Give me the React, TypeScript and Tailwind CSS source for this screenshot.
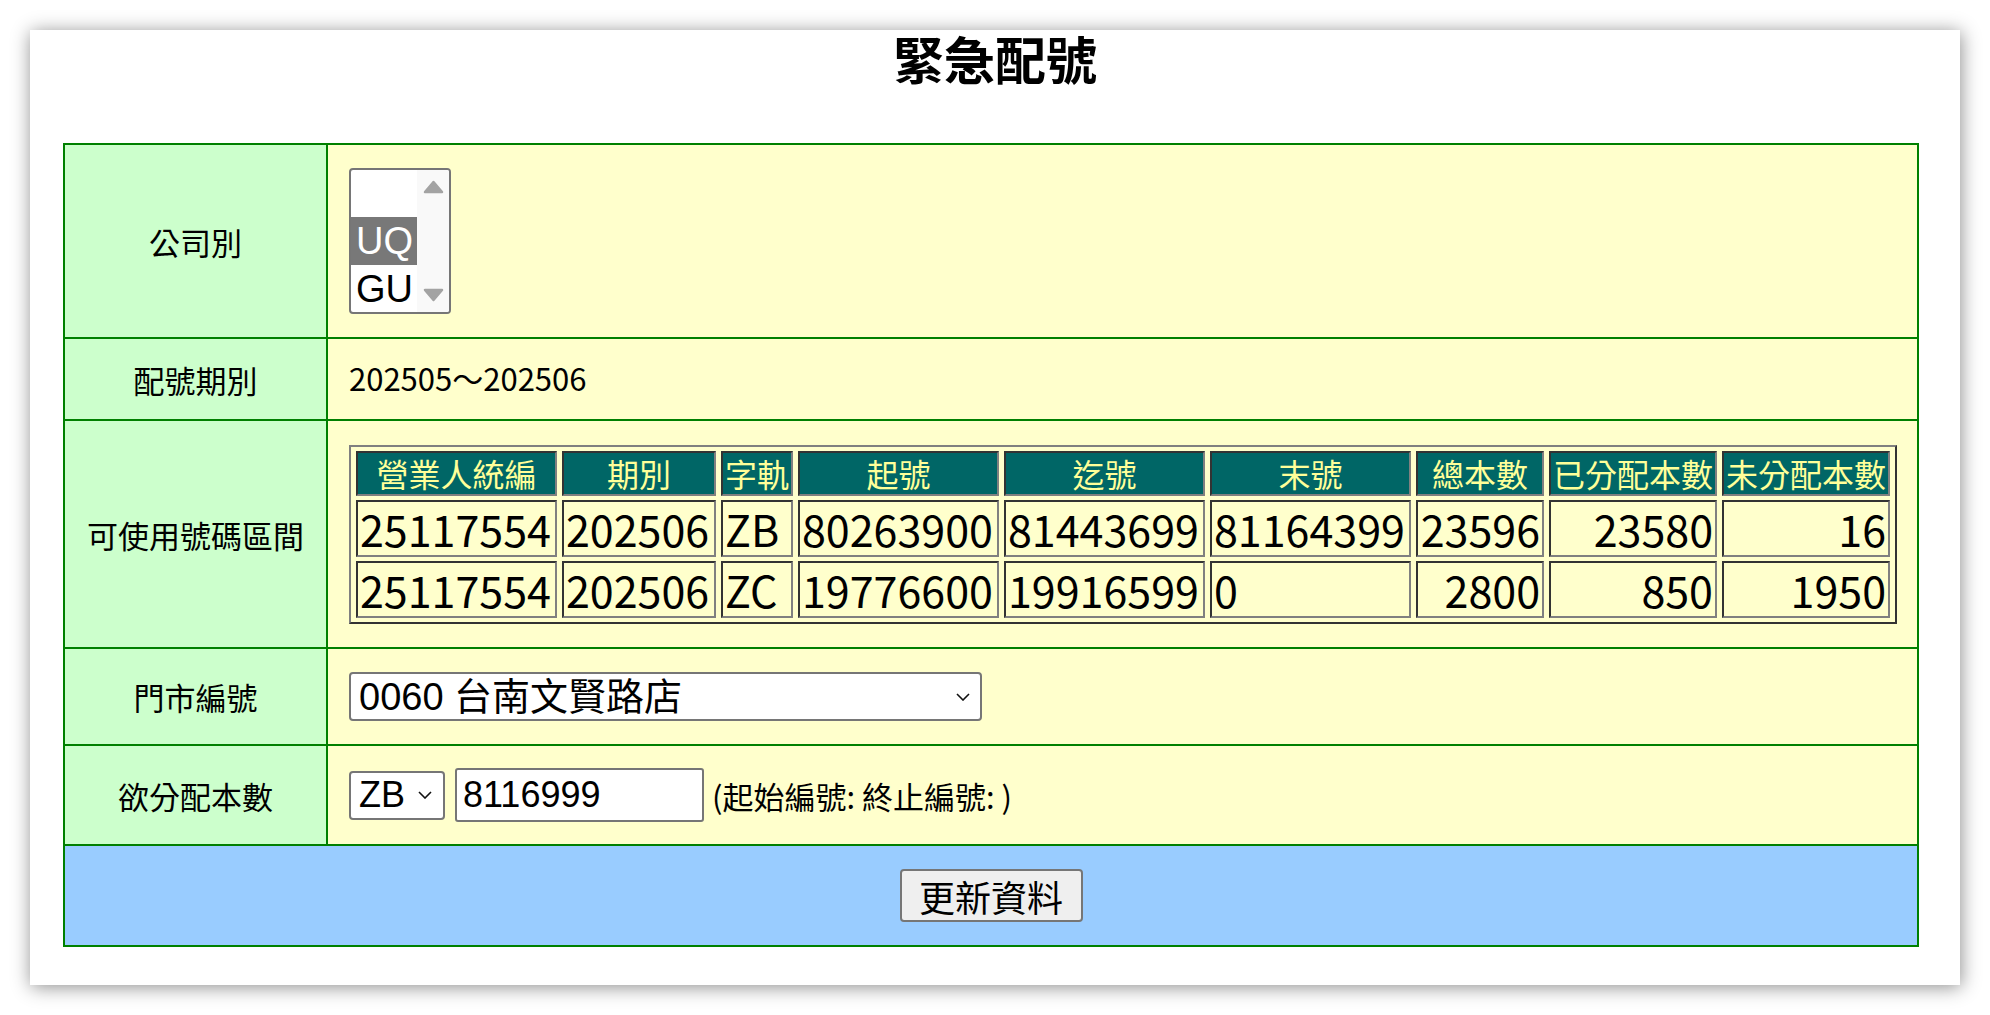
import type { ReactNode } from "react";

const heads = [
  { t: "營業人統編", w: "w-[201px]" },
  { t: "期別", w: "w-[154px]" },
  { t: "字軌", w: "w-[72px]" },
  { t: "起號", w: "w-[201px]" },
  { t: "迄號", w: "w-[201px]" },
  { t: "末號", w: "w-[201px]" },
  { t: "總本數", w: "w-[128px]" },
  { t: "已分配本數", w: "w-[168px]" },
  { t: "未分配本數", w: "w-[168px]" },
];

const rows = [
  ["25117554", "202506", "ZB", "80263900", "81443699", "81164399", "23596", "23580", "16"],
  ["25117554", "202506", "ZC", "19776600", "19916599", "0", "2800", "850", "1950"],
];

const inset = "border-2 border-t-[#333333] border-l-[#333333] border-r-[#808080] border-b-[#808080]";

function Row({ label, h, children }: { label: string; h: string; children: ReactNode }) {
  return (
    <tr className={h}>
      <td className="w-[263px] border-2 border-[#008000] bg-[#ccffcc] text-center align-middle text-[31px] leading-none">
        {label}
      </td>
      <td className="border-2 border-[#008000] bg-[#ffffcc] pl-[21px] align-middle">{children}</td>
    </tr>
  );
}

function Chevron() {
  return (
    <svg width="14" height="8" viewBox="0 0 14 8">
      <path d="M1 1l6 6 6-6" stroke="#111" strokeWidth="1.6" fill="none" />
    </svg>
  );
}

function Triangle({ down }: { down?: boolean }) {
  return (
    <svg width="21" height="14" viewBox="0 0 21 14">
      <path
        d={down ? "M2 2h17l-8.5 10z" : "M2 12h17l-8.5-10z"}
        fill="#a3a3a3"
        stroke="#a3a3a3"
        strokeWidth="2.5"
        strokeLinejoin="round"
      />
    </svg>
  );
}

export default function App() {
  return (
    <div className="w-[1990px] h-[1015px] overflow-hidden bg-white pt-[30px] pl-[30px] font-['Noto_Sans_CJK_TC',sans-serif] text-black">
      <div className="w-[1930px] h-[955px] bg-white shadow-[1px_2px_18px_rgba(0,0,0,0.45)] pt-[3px]">
        <h1 className="text-center text-[51px] leading-[50px] font-bold">緊急配號</h1>

        <table className="mt-[60px] ml-[33px] w-[1856px] border-collapse border-2 border-[#008000]">
          <tbody>
            <Row label="公司別" h="h-[194px]">
              {/* listbox */}
              <div className="flex w-[102px] h-[146px] overflow-hidden rounded-[4px] border-2 border-[#767676] bg-white font-['Liberation_Sans',sans-serif] text-[38px] leading-none">
                <div className="flex w-[66px] flex-col">
                  <div className="h-[47px]" />
                  <div className="flex h-[48px] items-center bg-[#787878] pl-[5px] text-white">UQ</div>
                  <div className="flex h-[47px] items-center pl-[5px]">GU</div>
                </div>
                <div className="flex flex-1 flex-col items-center justify-between bg-[#f9f9f9] py-[10px]">
                  <Triangle />
                  <Triangle down />
                </div>
              </div>
            </Row>

            <Row label="配號期別" h="h-[82px]">
              <span className="text-[31px] leading-none">202505～202506</span>
            </Row>

            <Row label="可使用號碼區間" h="h-[228px]">
              <table className="table-fixed w-[1548px] border-separate border-spacing-x-[5px] border-spacing-y-[4px] border-2 border-t-[#808080] border-l-[#808080] border-r-[#333333] border-b-[#333333]">
                <thead>
                  <tr>
                    {heads.map((c) => (
                      <th
                        key={c.t}
                        className={`${c.w} ${inset} h-[45px] bg-[#006666] p-0 text-center align-middle text-[32px] font-normal leading-none text-[#ffff99] whitespace-nowrap`}
                      >
                        {c.t}
                      </th>
                    ))}
                  </tr>
                </thead>
                <tbody>
                  {rows.map((r, i) => (
                    <tr key={i}>
                      {r.map((v, j) => (
                        <td
                          key={j}
                          className={`${inset} h-[57px] px-[2px] align-middle text-[43px] leading-none whitespace-nowrap ${
                            j >= 6 ? "text-right" : "text-left"
                          }`}
                        >
                          {v}
                        </td>
                      ))}
                    </tr>
                  ))}
                </tbody>
              </table>
            </Row>

            <Row label="門市編號" h="h-[97px]">
              <div className="flex w-[633px] h-[49px] items-center justify-between rounded-[4px] border-2 border-[#767676] bg-white pl-[8px] pr-[10px] font-['Liberation_Sans','Noto_Sans_CJK_TC',sans-serif] text-[38px] leading-none">
                <span>0060 台南文賢路店</span>
                <Chevron />
              </div>
            </Row>

            <Row label="欲分配本數" h="h-[100px]">
              <div className="flex items-center">
                <div className="flex w-[96px] h-[49px] items-center justify-between rounded-[4px] border-2 border-[#767676] bg-white pl-[8px] pr-[11px] font-['Liberation_Sans',sans-serif] text-[36px] leading-none">
                  <span>ZB</span>
                  <Chevron />
                </div>
                <input
                  readOnly
                  defaultValue="8116999"
                  className="ml-[10px] w-[249px] h-[54px] rounded-[3px] border-2 border-[#767676] bg-white px-[6px] font-['Liberation_Sans',sans-serif] text-[36px] leading-none"
                />
                <span className="ml-[8px] text-[31px] leading-none">(起始編號: 終止編號: )</span>
              </div>
            </Row>

            <tr className="h-[101px]">
              <td colSpan={2} className="border-2 border-[#008000] bg-[#99ccff] text-center align-middle">
                <button className="w-[183px] h-[53px] rounded-[4px] border-2 border-[#767676] bg-[#efefef] text-[36px] leading-none">
                  更新資料
                </button>
              </td>
            </tr>
          </tbody>
        </table>
      </div>
    </div>
  );
}
